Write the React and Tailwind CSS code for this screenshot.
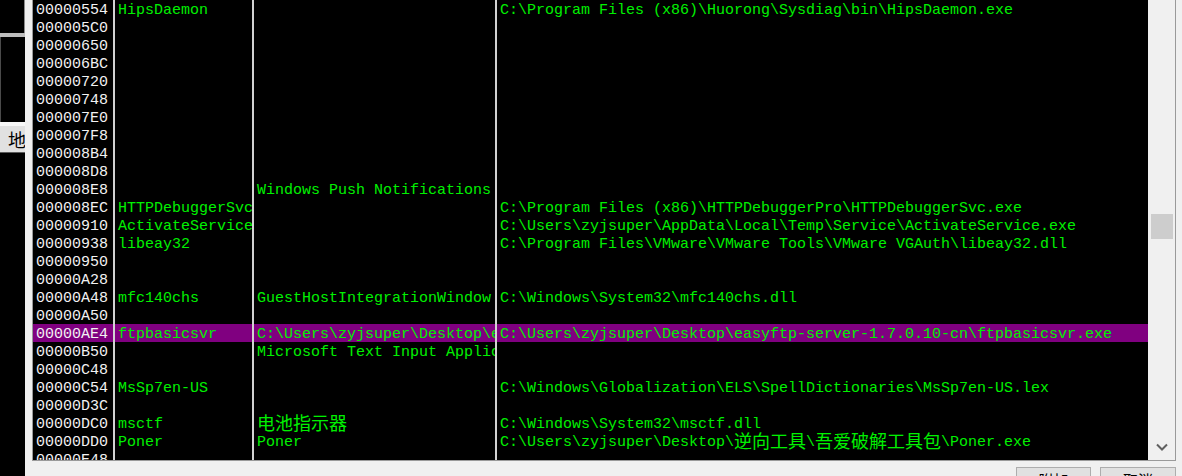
import React from "react";

const rows = [
  ["00000554", "HipsDaemon", "", "C:\\Program Files (x86)\\Huorong\\Sysdiag\\bin\\HipsDaemon.exe"],
  ["000005C0", "", "", ""],
  ["00000650", "", "", ""],
  ["000006BC", "", "", ""],
  ["00000720", "", "", ""],
  ["00000748", "", "", ""],
  ["000007E0", "", "", ""],
  ["000007F8", "", "", ""],
  ["000008B4", "", "", ""],
  ["000008D8", "", "", ""],
  ["000008E8", "", "Windows Push Notifications User Service", ""],
  ["000008EC", "HTTPDebuggerSvc", "", "C:\\Program Files (x86)\\HTTPDebuggerPro\\HTTPDebuggerSvc.exe"],
  ["00000910", "ActivateService", "", "C:\\Users\\zyjsuper\\AppData\\Local\\Temp\\Service\\ActivateService.exe"],
  ["00000938", "libeay32", "", "C:\\Program Files\\VMware\\VMware Tools\\VMware VGAuth\\libeay32.dll"],
  ["00000950", "", "", ""],
  ["00000A28", "", "", ""],
  ["00000A48", "mfc140chs", "GuestHostIntegrationWindow", "C:\\Windows\\System32\\mfc140chs.dll"],
  ["00000A50", "", "", ""],
  ["00000AE4", "ftpbasicsvr", "C:\\Users\\zyjsuper\\Desktop\\easyftp-server-1.7.0.10-cn\\ftpbasicsvr.exe", "C:\\Users\\zyjsuper\\Desktop\\easyftp-server-1.7.0.10-cn\\ftpbasicsvr.exe", true],
  ["00000B50", "", "Microsoft Text Input Application", ""],
  ["00000C48", "", "", ""],
  ["00000C54", "MsSp7en-US", "", "C:\\Windows\\Globalization\\ELS\\SpellDictionaries\\MsSp7en-US.lex"],
  ["00000D3C", "", "", ""],
  ["00000DC0", "msctf", "电池指示器", "C:\\Windows\\System32\\msctf.dll"],
  ["00000DD0", "Poner", "Poner", "C:\\Users\\zyjsuper\\Desktop\\逆向工具\\吾爱破解工具包\\Poner.exe"],
  ["00000E48", "", "", ""],
];

const CJK = /([\u3000-\u9fff\uff00-\uffef]+)/;

function Txt({ s }) {
  const parts = s.split(CJK);
  return (
    <>
      {parts.map((p, i) =>
        i % 2 === 1 ? (
          <span
            key={i}
            className="inline-block align-top -mt-[3px] text-[18px] leading-[18px] font-['Noto_Sans_CJK_SC',sans-serif]"
          >
            {p}
          </span>
        ) : (
          <span key={i}>{p}</span>
        )
      )}
    </>
  );
}

const cell = "shrink-0 border-r-2 border-[#d2d2d2] pl-[3px] pt-[2px] overflow-hidden whitespace-nowrap";

function Row({ r }) {
  const sel = r[4];
  return (
    <div className={`flex h-[18px] leading-[18px] ${sel ? "bg-[#800080]" : ""}`}>
      <div className={`w-[82px] text-[#f2f2f2] ${cell}`}>{r[0]}</div>
      <div className={`w-[139px] text-[#00f000] ${cell}`}>
        <Txt s={r[1]} />
      </div>
      <div className={`w-[243px] text-[#00f000] ${cell}`}>
        <Txt s={r[2]} />
      </div>
      <div className="flex-1 pl-[3px] pt-[2px] overflow-hidden whitespace-nowrap text-[#00f000]">
        <Txt s={r[3]} />
      </div>
    </div>
  );
}

export default function App() {
  return (
    <div className="w-[1182px] h-[476px] flex overflow-hidden bg-[#f0f0f0] font-['Liberation_Mono','Noto_Sans_CJK_SC',monospace]">
      {/* background window strip */}
      <div className="w-[25px] shrink-0 flex flex-col">
        <div className="h-[33px] bg-black border-r border-[#8a8a8a]" />
        <div className="h-[4px] bg-[#bdbdbd]" />
        <div className="h-[85px] bg-black border-l border-[#4a4a4a]" />
        <div className="h-[4px] bg-[#f8f8f8]" />
        <div className="h-[26px] bg-[#e1e1e1] overflow-hidden whitespace-nowrap pl-[8px] text-[18px] leading-[26px] text-black font-['Noto_Sans_CJK_SC',sans-serif]">
          地
        </div>
        <div className="flex-1 bg-black border-t border-[#5a5a5a]" />
      </div>

      {/* dialog */}
      <div className="flex-1 flex flex-col pl-[7px] pr-[6px]">
        <div className="h-[461px] shrink-0 flex border-l border-r border-b border-[#9a9a9a]">
          <div className="flex-1 bg-black overflow-hidden text-[15px]">
            {rows.map((r, i) => (
              <Row key={i} r={r} />
            ))}
          </div>
          <div className="w-[27px] shrink-0 bg-[#f0f0f0] flex flex-col">
            <div className="h-[214px]" />
            <div className="h-[25px] ml-[3px] w-[22px] bg-[#cdcdcd]" />
            <div className="flex-1" />
            <div className="h-[26px] flex items-center justify-center">
              <svg width="12" height="8" viewBox="0 0 12 8">
                <path d="M1 1.5 L6 6.5 L11 1.5" fill="none" stroke="#606060" strokeWidth="2" />
              </svg>
            </div>
          </div>
        </div>
        <div className="flex justify-end gap-[9px] mt-[6px]">
          <div className="w-[75px] h-[28px] shrink-0 border border-[#adadad] bg-[#e1e1e1] flex justify-center pt-[3px] text-[15px] leading-[18px] text-black font-['Noto_Sans_CJK_SC',sans-serif]">
            附加
          </div>
          <div className="w-[76px] h-[28px] shrink-0 border border-[#adadad] bg-[#e1e1e1] flex justify-center pt-[3px] text-[15px] leading-[18px] text-black font-['Noto_Sans_CJK_SC',sans-serif]">
            取消
          </div>
        </div>
      </div>
    </div>
  );
}
